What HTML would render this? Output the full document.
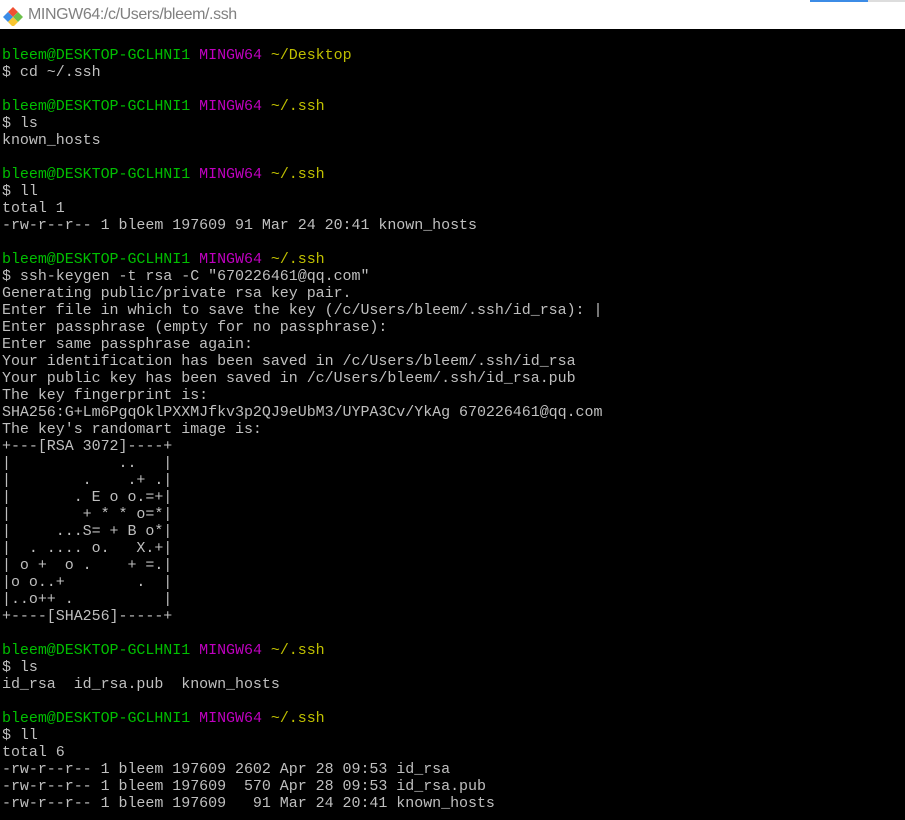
<!DOCTYPE html>
<html><head><meta charset="utf-8"><style>
html,body{margin:0;padding:0;width:905px;height:820px;overflow:hidden;background:#000}
#title{position:absolute;left:0;top:0;width:905px;height:29px;background:#fff}
#title .t{position:absolute;left:28px;top:6px;font:16px "Liberation Sans",sans-serif;color:#808080;letter-spacing:-0.4px}
#blue{position:absolute;left:810px;top:0;width:58px;height:2px;background:#3c8ce6}
#grey{position:absolute;left:868px;top:0;width:37px;height:2px;background:#ddd}
pre{position:absolute;left:2px;top:47px;margin:0;font:15px/17px "Liberation Mono",monospace;color:#bfbfbf;letter-spacing:-0.04px}
.g{color:#00bf00}.m{color:#bf00bf}.y{color:#bfbf00}
</style></head><body>
<div id="title">
<svg style="position:absolute;left:3px;top:6px" width="20" height="20" viewBox="0 0 20 20">
<polygon points="10,1 15,6 10,11 5,6" fill="#f05033"/>
<polygon points="5,6 10,11 5,16 0,11" fill="#3c8ce6"/>
<polygon points="15,6 20,11 15,16 10,11" fill="#6cc04a"/>
<polygon points="10,11 15,16 10,21 5,16" fill="#f8c630"/>
</svg>
<span class="t">MINGW64:/c/Users/bleem/.ssh</span>
<div id="blue"></div><div id="grey"></div>
</div>
<pre><span class="g">bleem@DESKTOP-GCLHNI1</span> <span class="m">MINGW64</span> <span class="y">~/Desktop</span>
$ cd ~/.ssh

<span class="g">bleem@DESKTOP-GCLHNI1</span> <span class="m">MINGW64</span> <span class="y">~/.ssh</span>
$ ls
known_hosts

<span class="g">bleem@DESKTOP-GCLHNI1</span> <span class="m">MINGW64</span> <span class="y">~/.ssh</span>
$ ll
total 1
-rw-r--r-- 1 bleem 197609 91 Mar 24 20:41 known_hosts

<span class="g">bleem@DESKTOP-GCLHNI1</span> <span class="m">MINGW64</span> <span class="y">~/.ssh</span>
$ ssh-keygen -t rsa -C "670226461@qq.com"
Generating public/private rsa key pair.
Enter file in which to save the key (/c/Users/bleem/.ssh/id_rsa): |
Enter passphrase (empty for no passphrase):
Enter same passphrase again:
Your identification has been saved in /c/Users/bleem/.ssh/id_rsa
Your public key has been saved in /c/Users/bleem/.ssh/id_rsa.pub
The key fingerprint is:
SHA256:G+Lm6PgqOklPXXMJfkv3p2QJ9eUbM3/UYPA3Cv/YkAg 670226461@qq.com
The key's randomart image is:
+---[RSA 3072]----+
|            ..   |
|        .    .+ .|
|       . E o o.=+|
|        + * * o=*|
|     ...S= + B o*|
|  . .... o.   X.+|
| o +  o .    + =.|
|o o..+        .  |
|..o++ .          |
+----[SHA256]-----+

<span class="g">bleem@DESKTOP-GCLHNI1</span> <span class="m">MINGW64</span> <span class="y">~/.ssh</span>
$ ls
id_rsa  id_rsa.pub  known_hosts

<span class="g">bleem@DESKTOP-GCLHNI1</span> <span class="m">MINGW64</span> <span class="y">~/.ssh</span>
$ ll
total 6
-rw-r--r-- 1 bleem 197609 2602 Apr 28 09:53 id_rsa
-rw-r--r-- 1 bleem 197609  570 Apr 28 09:53 id_rsa.pub
-rw-r--r-- 1 bleem 197609   91 Mar 24 20:41 known_hosts</pre>
</body></html>
